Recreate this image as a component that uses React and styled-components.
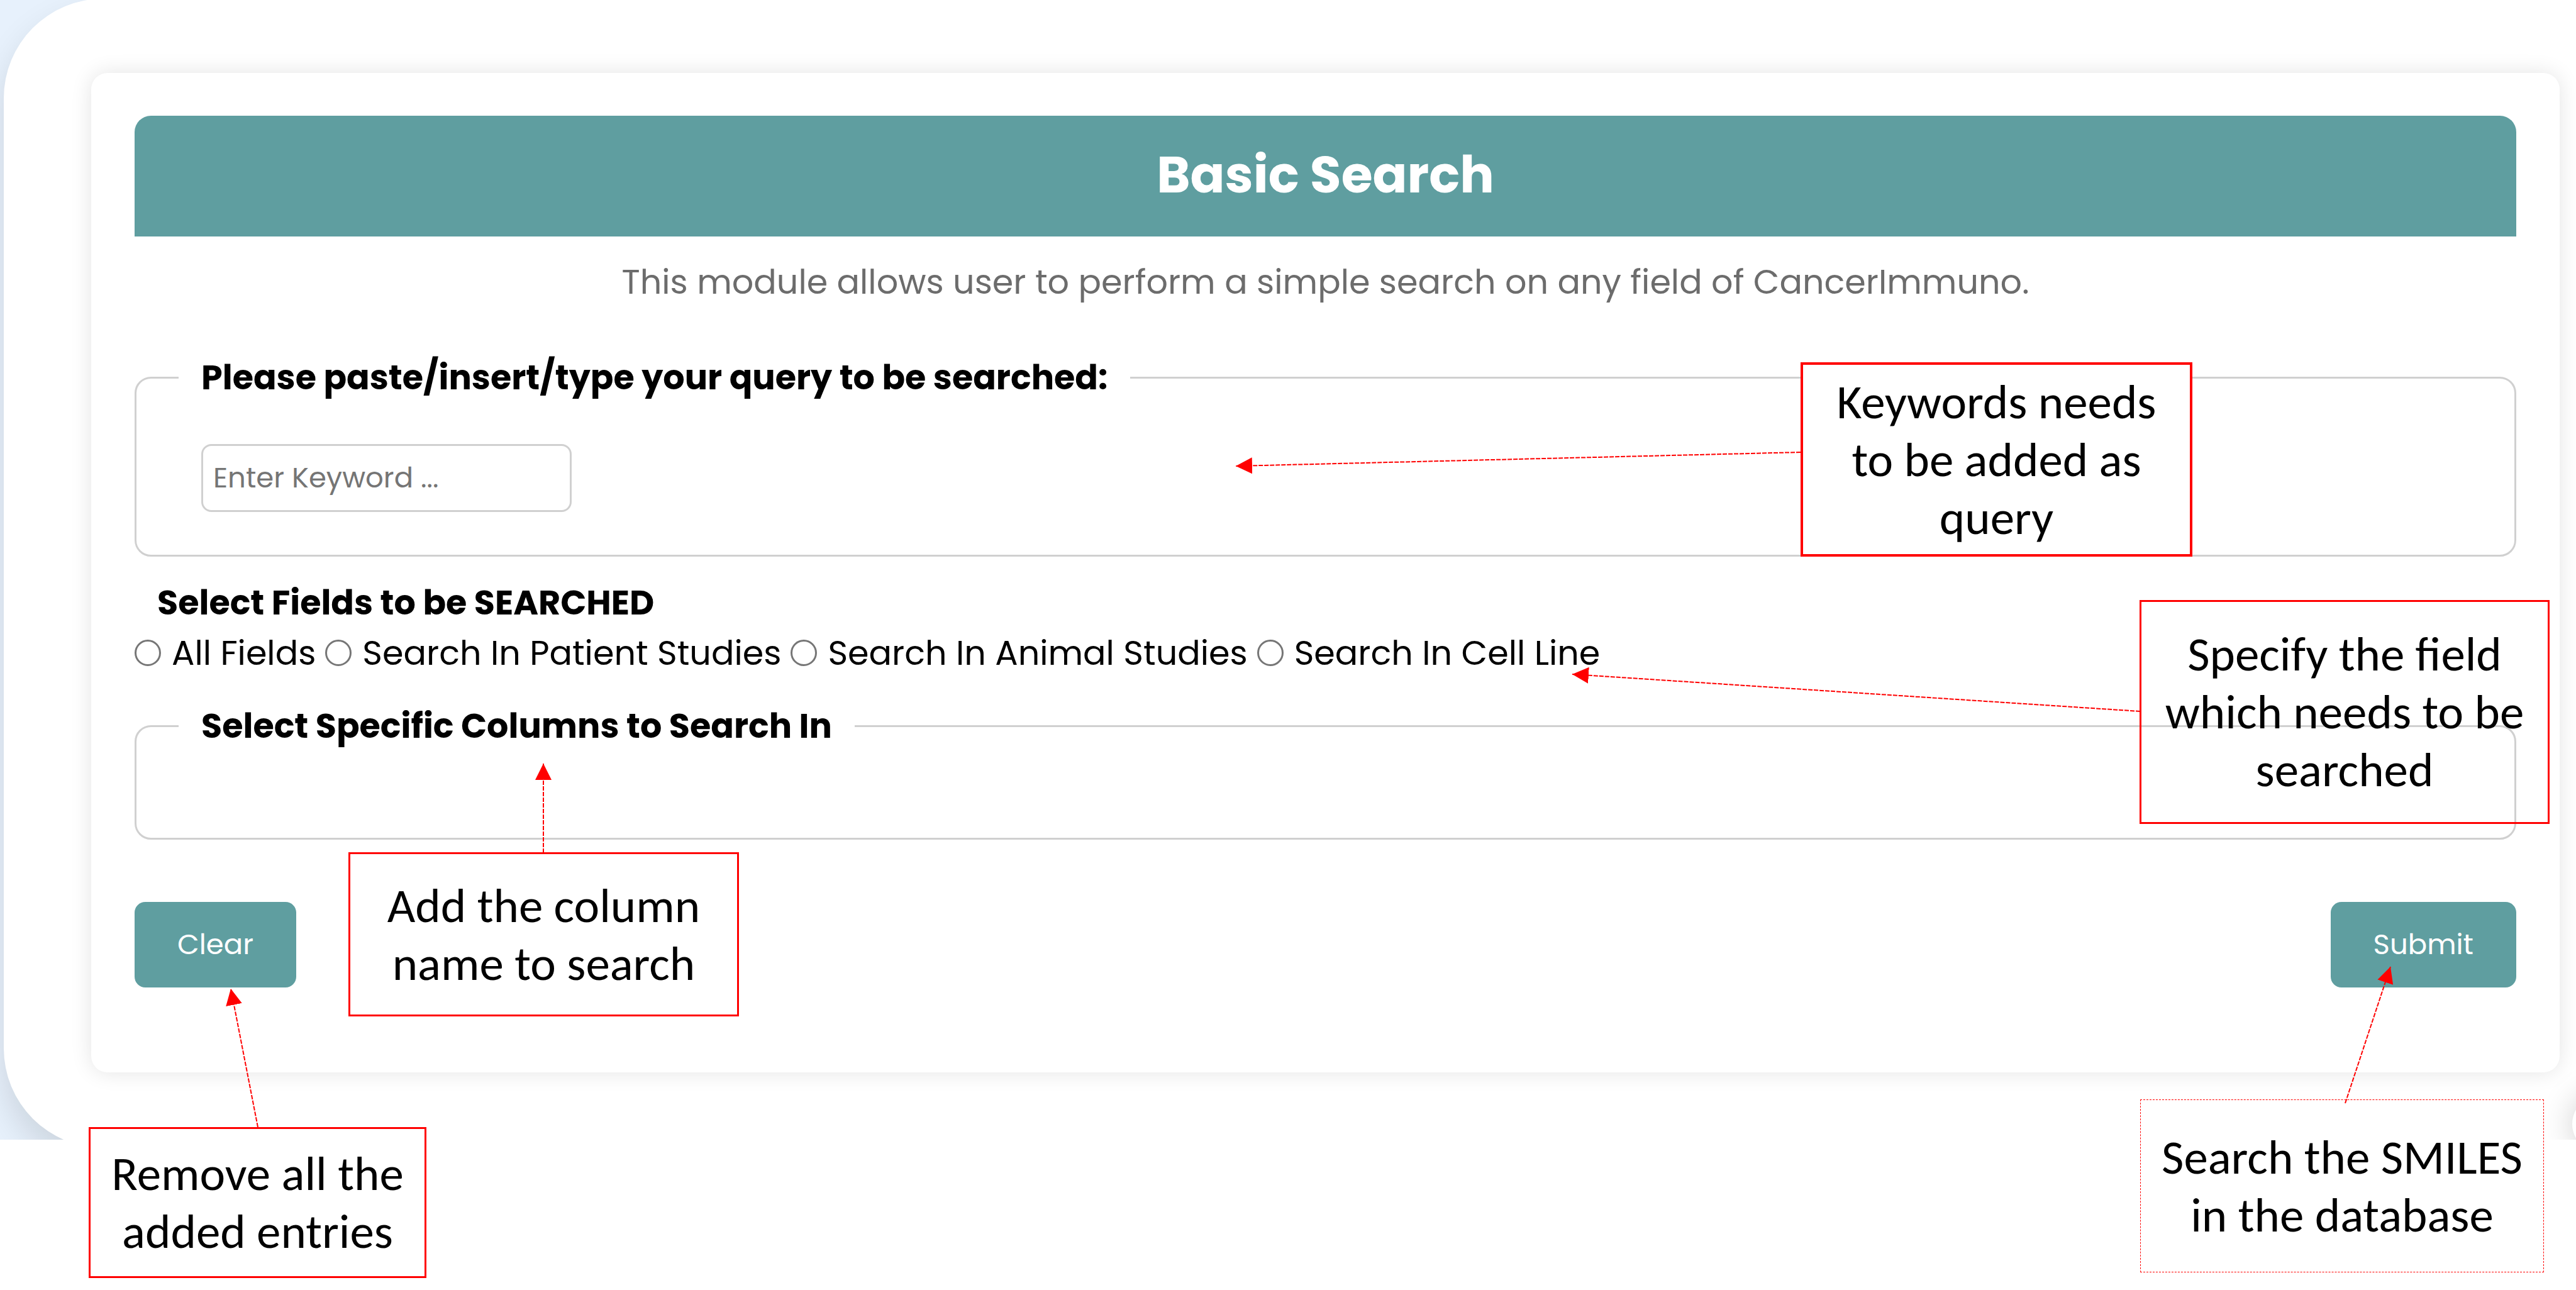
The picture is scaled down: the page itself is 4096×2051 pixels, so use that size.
import React from "react";
import styled, { createGlobalStyle } from "styled-components";

const TEAL = "#5f9ea0";
const LINE = "#d0d0d0";
const RED = "#ff0000";

const GlobalStyle = createGlobalStyle`
  *, *::before, *::after { box-sizing: border-box; }
  body { margin: 0; background: #ffffff; }
  body, input, button { font-family: Poppins, Inter, sans-serif; }
`;

const Page = styled.div`
  position: relative;
  padding-bottom: 240px;
  color: #000000;
  font-size: 54px;
  line-height: 80px;
  overflow: hidden;
`;

const Screen = styled.section`
  position: relative;
  overflow: hidden;
  background: #e7f1fc;
`;

const Panel = styled.main`
  margin: -2px 0 -13px 6px;
  padding: 118px 26px 120px 139px;
  border-radius: 158px 0 0 158px;
  background: #ffffff;
  box-shadow: 0 27px 54px rgba(0, 0, 0, 0.12);
`;

const Card = styled.form`
  padding: 68px 69px 135px;
  border-radius: 26px;
  background: #ffffff;
  box-shadow: 0 0 34px rgba(0, 0, 0, 0.11);
`;

const Header = styled.header`
  padding: 46px 0 50px;
  border-radius: 26px 26px 0 0;
  background: ${TEAL};
  color: #ffffff;
  text-align: center;
`;

const Title = styled.h1`
  margin: 0;
  font-size: 81px;
  line-height: 96px;
  font-weight: 700;
`;

const Intro = styled.p`
  margin: 32px 0 72px;
  color: #6c6c6c;
  text-align: center;
`;

const Group = styled.fieldset`
  min-width: 0;
  margin: 0;
  padding: 66px 103px 68px;
  border: 3px solid ${LINE};
  border-radius: 26px;
`;

const Legend = styled.legend`
  margin-left: -36px;
  padding: 0 36px;
  font-weight: 700;
`;

const KeywordInput = styled.input`
  display: block;
  width: 589px;
  height: 108px;
  padding: 0 16px;
  border: 3px solid ${LINE};
  border-radius: 16px;
  background: #ffffff;
  font-size: 45px;

  &::placeholder { color: #757575; opacity: 1; }
`;

const SectionTitle = styled.h2`
  margin: 33px 0 0;
  padding-left: 36px;
  font-size: 54px;
  line-height: 80px;
  font-weight: 700;
`;

const Choices = styled.div`
  display: flex;
  flex-wrap: wrap;
  gap: 15px;
  margin-bottom: 36px;
`;

const Choice = styled.label`
  display: flex;
  align-items: center;
  gap: 17px;
`;

const Radio = styled.input`
  appearance: none;
  width: 42px;
  height: 42px;
  margin: 0;
  border: 3px solid #767676;
  border-radius: 50%;
  background: #ffffff;

  &:checked { background: radial-gradient(${TEAL} 50%, #ffffff 55%); }
`;

const ColumnList = styled.div`
  min-height: 4px;
`;

const Actions = styled.div`
  display: flex;
  justify-content: space-between;
  margin-top: 99px;
`;

const Button = styled.button`
  height: 136px;
  padding: 0 68px;
  border: 0;
  border-radius: 17px;
  background: ${TEAL};
  color: #ffffff;
  font-size: 45px;
`;

const FloatingButton = styled.span`
  position: absolute;
  right: -86px;
  bottom: -21px;
  width: 92px;
  height: 92px;
  border-radius: 50%;
  background: #ffffff;
  box-shadow: 0 0 54px rgba(0, 0, 0, 0.2);
`;

const Callout = styled.aside`
  position: absolute;
  left: ${(p) => p.$x}px;
  top: ${(p) => p.$y}px;
  width: ${(p) => p.$w}px;
  height: ${(p) => p.$h}px;
  display: flex;
  align-items: center;
  justify-content: center;
  border: ${(p) => p.$border || `3px solid ${RED}`};
  background: ${(p) => p.$fill || "transparent"};
  font-family: Carlito, Calibri, Lato, sans-serif;
  font-size: 77px;
  line-height: 92px;
  text-align: center;
  white-space: pre;
`;

const Arrows = styled.svg`
  position: absolute;
  left: 0;
  top: 0;
  width: 4096px;
  height: 2051px;
  pointer-events: none;
`;

const fields = [
  "All Fields",
  "Search In Patient Studies",
  "Search In Animal Studies",
  "Search In Cell Line",
];

const callouts = [
  { x: 2863, y: 576, w: 623, h: 309, fill: "#ffffff", border: `4px solid ${RED}`, text: "Keywords needs\nto be added as\nquery" },
  { x: 3402, y: 954, w: 652, h: 356, text: "Specify the field\nwhich needs to be\nsearched" },
  { x: 554, y: 1355, w: 621, h: 261, fill: "#ffffff", text: "Add the column\nname to search" },
  { x: 141, y: 1792, w: 537, h: 240, fill: "#ffffff", text: "Remove all the\nadded entries" },
  { x: 3403, y: 1748, w: 642, h: 275, border: `1px dashed ${RED}`, text: "Search the SMILES\nin the database" },
];

const arrows = [
  { from: [2863, 719], to: [1965, 741] },
  { from: [3403, 1131], to: [2500, 1072] },
  { from: [864, 1356], to: [864, 1214] },
  { from: [410, 1792], to: [367, 1572] },
  { from: [3729, 1754], to: [3801, 1537] },
];

function Arrow({ from, to }) {
  return (
    <line
      x1={from[0]}
      y1={from[1]}
      x2={to[0]}
      y2={to[1]}
      stroke={RED}
      strokeWidth="2"
      strokeDasharray="7 2"
      markerEnd="url(#arrowhead)"
    />
  );
}

export default function App() {
  return (
    <Page>
      <GlobalStyle />
      <Screen>
        <Panel>
          <Card onSubmit={(e) => e.preventDefault()}>
            <Header>
              <Title>Basic Search</Title>
            </Header>
            <Intro>This module allows user to perform a simple search on any field of CancerImmuno.</Intro>

            <Group>
              <Legend id="query-label">Please paste/insert/type your query to be searched:</Legend>
              <KeywordInput type="text" name="query" placeholder="Enter Keyword ..." aria-labelledby="query-label" />
            </Group>

            <SectionTitle id="fields-label">Select Fields to be SEARCHED</SectionTitle>
            <Choices role="radiogroup" aria-labelledby="fields-label">
              {fields.map((name) => (
                <Choice key={name}>
                  <Radio type="radio" name="field" value={name} />
                  {name}
                </Choice>
              ))}
            </Choices>

            <Group>
              <Legend>Select Specific Columns to Search In</Legend>
              <ColumnList />
            </Group>

            <Actions>
              <Button type="reset">Clear</Button>
              <Button type="submit">Submit</Button>
            </Actions>
          </Card>
        </Panel>
        <FloatingButton />
      </Screen>

      {callouts.map((c) => (
        <Callout key={c.text} $x={c.x} $y={c.y} $w={c.w} $h={c.h} $fill={c.fill} $border={c.border}>
          {c.text}
        </Callout>
      ))}

      <Arrows viewBox="0 0 4096 2051" aria-hidden="true">
        <defs>
          <marker
            id="arrowhead"
            markerUnits="userSpaceOnUse"
            markerWidth="26"
            markerHeight="26"
            refX="26"
            refY="13"
            orient="auto"
          >
            <path d="M0 0 L26 13 L0 26 Z" fill={RED} />
          </marker>
        </defs>
        {arrows.map((a) => (
          <Arrow key={a.to.join()} from={a.from} to={a.to} />
        ))}
      </Arrows>
    </Page>
  );
}
